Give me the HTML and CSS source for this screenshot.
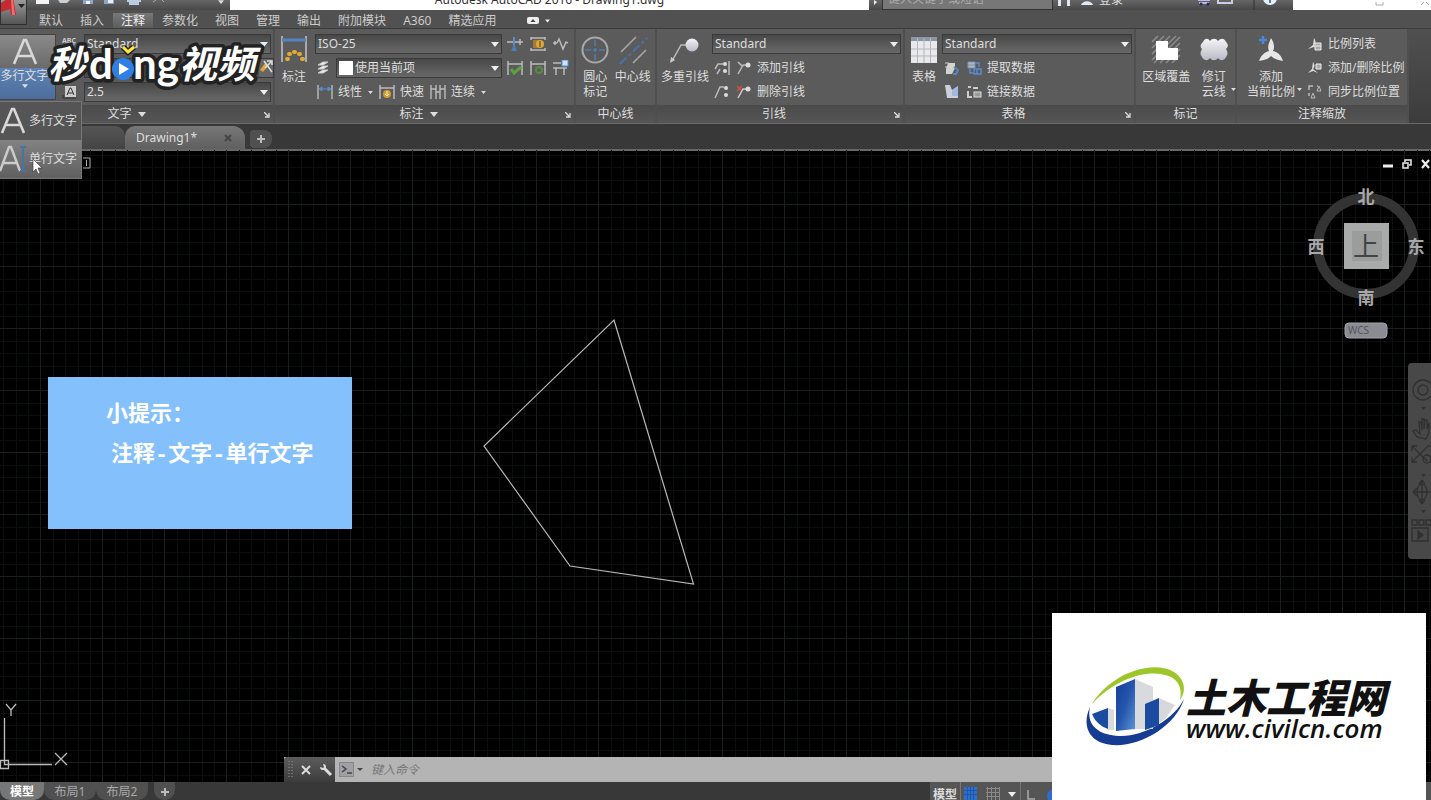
FILE: index.html
```html
<!DOCTYPE html>
<html lang="zh-CN">
<head>
    <meta charset="UTF-8">
    <meta name="viewport" content="width=device-width, initial-scale=1.0">
    <title>Autodesk AutoCAD 2016 - Drawing1.dwg</title>
    <link rel="stylesheet" href="styles.css">
</head>
<body>
    <!-- shared icons -->
    <svg class="defs" width="0" height="0" aria-hidden="true">
        <defs>
            <linearGradient id="silver" x1="0" y1="0" x2="0" y2="1">
                <stop offset="0" stop-color="#f4f4f8"/><stop offset="1" stop-color="#b9bac4"/>
            </linearGradient>
            <linearGradient id="tower" x1="0" y1="0" x2="1" y2="1">
                <stop offset="0" stop-color="#173f9a"/><stop offset="0.5" stop-color="#2456ac"/><stop offset="1" stop-color="#5f94d4"/>
            </linearGradient>
            <symbol id="down" viewBox="0 0 8 5"><path d="M0 0h8L4 5z" fill="currentColor"/></symbol>
            <symbol id="launch" viewBox="0 0 6 6"><path d="M0 0l4 4M5 1v4H1" fill="none" stroke="currentColor" stroke-width="1.3"/></symbol>
            <symbol id="letter-a" viewBox="0 0 26 28"><path d="M2 26L12 2h2l10 24M6 18h14" fill="none" stroke="#d8d8d8" stroke-width="2.6"/></symbol>
            <symbol id="dim" viewBox="0 0 16 16"><path d="M1 1v14M15 1v14" stroke="#b5b5b5" stroke-width="1.5"/><path d="M2 5h12M2 5l3-2v4zM14 5l-3-2v4z" stroke="#5b8cc8" fill="#5b8cc8"/></symbol>
            <symbol id="dim-quick" viewBox="0 0 16 16"><path d="M1 1v14M15 1v14M1 4h14" stroke="#bbb" stroke-width="1.5" fill="none"/><circle cx="8" cy="10" r="4" fill="#d79a35"/><path d="M8 7v5M6 10l2 2 2-2" stroke="#fff0a0" fill="none"/></symbol>
            <symbol id="dim-cont" viewBox="0 0 16 16"><path d="M1 1v14M6 1v14M10 1v14M15 1v14M1 5h5M10 5h5M6 8h4" stroke="#bbb" stroke-width="1.4"/></symbol>
        </defs>
    </svg>

    <header class="titlebar">
        <div class="quick">
            <svg width="150" height="10" viewBox="0 0 150 10">
                <rect x="1" y="0" width="13" height="4" fill="#f4f4f4"/>
                <path d="M23 0h12l-3 3H25z" fill="#c9ced3"/>
                <path d="M48 0h10v4H48z" fill="#8ba9c6"/><path d="M51 1h4v3h-4z" fill="#eee"/>
                <path d="M69 0h10v4H69z" fill="#8ba9c6"/><path d="M73 0h5v3h-5z" fill="#eee"/>
                <path d="M92 0h14v2h-2v3H94V2h-2z" fill="#b9cde0"/>
                <path d="M118 2l3-2M127 0l2 2" stroke="#aaa"/>
            </svg>
            <svg class="tiny" width="6" height="4"><use href="#down"/></svg>
        </div>
        <div class="doc-title">Autodesk AutoCAD 2016 - Drawing1.dwg</div>
        <div class="info">
            <svg class="info-arrow" width="13" height="10" viewBox="0 0 13 10"><path d="M5 0l3 2-3 3z" fill="#eee"/></svg>
            <input class="search" type="text" aria-label="搜索" placeholder="键入关键字或短语">
            <svg width="44" height="10" viewBox="0 0 44 10"><path d="M5 0h3v6H5zM14 0h3v6h-3z" fill="#dfe6ec"/><path d="M28 5c2-5 10-5 12 0z" fill="#dfe9f2"/></svg>
            <a class="login" href="#">登录</a>
            <svg class="info-icons" width="90" height="10" viewBox="0 0 90 10">
                <path d="M1 0h12M2 3h10" stroke="#b8bde0" stroke-width="2"/><circle cx="4" cy="4" r="1.5" fill="#252a66"/><circle cx="11" cy="4" r="1.5" fill="#252a66"/>
                <path d="M21 0v3h14V0" fill="none" stroke="#c9cdea" stroke-width="2"/>
                <path d="M57 0v10" stroke="#333"/>
                <circle cx="73" cy="-2" r="7" fill="#e8f0f7"/><path d="M73 0v3" stroke="#4b7eae" stroke-width="2"/>
            </svg>
        </div>
        <div class="window-btns">
            <svg width="60" height="10" viewBox="0 0 60 10"><path d="M5 0v3h7V0" fill="none" stroke="#aaa"/><path d="M50 3l4-4 4 4" fill="none" stroke="#aaa"/></svg>
        </div>
        <button class="app-btn" aria-label="应用程序菜单">
            <svg width="26" height="24" viewBox="0 0 26 24"><path d="M0 3L9-3h3l3 18h-5l-1-6-9 3z" fill="#c52a31"/><path d="M10 0l2 0 2 15h-3z" fill="#f06a6a"/><path d="M17 4h7l-3.500 4z" fill="#222"/></svg>
        </button>
    </header>

    <nav class="tabs">
        <a href="#">默认</a>
        <a href="#">插入</a>
        <a href="#" class="active">注释</a>
        <a href="#">参数化</a>
        <a href="#">视图</a>
        <a href="#">管理</a>
        <a href="#">输出</a>
        <a href="#">附加模块</a>
        <a href="#">A360</a>
        <a href="#">精选应用</a>
        <button class="min-btn" aria-label="最小化功能区">
            <svg width="24" height="8" viewBox="0 0 24 8"><rect width="12" height="7" rx="2" fill="#eee"/><path d="M3.500 5h5L6 2z" fill="#444"/><path d="M18 2.500h5l-2.500 3z" fill="#eee"/></svg>
        </button>
    </nav>

    <main class="ribbon">
        <section class="panel">
            <div class="panel-body text-body">
                <button class="text-btn">
                    <span class="text-btn-top"><svg width="26" height="28"><use href="#letter-a"/></svg></span>
                    <span class="text-btn-label">多行文字<svg width="6" height="4"><use href="#down"/></svg></span>
                </button>
                <div class="rows">
                    <div class="row">
                        <svg width="16" height="16" viewBox="0 0 16 16"><text x="0" y="7" class="abc">ABC</text><path d="M3 10l3 4 7-7" stroke="#6fa8dc" fill="none" stroke-width="2"/></svg>
                        <select aria-label="文字样式"><option>Standard</option></select>
                    </div>
                    <div class="row">
                        <svg width="16" height="16" viewBox="0 0 16 16"><circle cx="7" cy="7" r="4" fill="none" stroke="#ccc" stroke-width="2"/></svg>
                        <div class="find">
                            <input type="text" aria-label="查找文字">
                            <svg width="14" height="16" viewBox="0 0 14 16"><path d="M1 11l5-7 3 3-5 6z" fill="#e0a339"/><path d="M5 2l8 11M12 3L6 9M8 2h5v4" stroke="#ddd" stroke-width="1.5" fill="none"/></svg>
                        </div>
                    </div>
                    <div class="row">
                        <svg width="16" height="16" viewBox="0 0 16 16"><rect x="3" y="2" width="11" height="11" fill="#ccc"/><path d="M5 11l3-7h1l3 7M6 9h5M1 14v-3M1 14h13" stroke="#333" fill="none"/></svg>
                        <select aria-label="文字高度"><option>2.5</option></select>
                    </div>
                </div>
            </div>
            <h2>文字<svg width="8" height="5"><use href="#down"/></svg><button class="launcher" aria-label="文字设置"><svg width="6" height="6"><use href="#launch"/></svg></button></h2>
        </section>

        <section class="panel">
            <div class="panel-body dim-body">
                <button class="big">
                    <svg width="30" height="32" viewBox="0 0 30 32"><path d="M3 2v26M27 2v26" stroke="#aaa" stroke-width="2"/><path d="M3 6h24" stroke="#5584bb" stroke-width="3"/><path d="M8 25h1M10 20h1M15 18h1M20 20h1M23 25h1" stroke="#e0aa35" stroke-width="4" stroke-linecap="round"/></svg>
                    标注
                </button>
                <div class="rows">
                    <div class="row">
                        <select aria-label="标注样式"><option>ISO-25</option></select>
                        <div class="tools">
                            <svg width="16" height="16" viewBox="0 0 16 16"><path d="M0 6h16M13 3v6" stroke="#bbb" stroke-width="1.500"/><path d="M7 1v12" stroke="#5b8cc8" stroke-width="2"/><path d="M4 15l3-7 3 7z" fill="#4d7ebd"/></svg>
                            <svg width="16" height="16" viewBox="0 0 16 16"><path d="M1 1v3M15 1v3M1 2h14M1 12v3M15 12v3M1 14h14" stroke="#bbb" stroke-width="1.5"/><rect x="3" y="4" width="6" height="8" fill="#a77d2c"/><circle cx="10" cy="8" r="4" fill="#dda63a"/><path d="M10 5v6" stroke="#604010"/></svg>
                            <svg width="16" height="16" viewBox="0 0 16 16"><path d="M0 7h4M2 5v4M4 7l2-4 4 10 3-7 2 1" fill="none" stroke="#bbb" stroke-width="1.500"/></svg>
                        </div>
                    </div>
                    <div class="row">
                        <svg width="16" height="16" viewBox="0 0 16 16"><path d="M3 5l5-3h5L8 5zM3 9l5-3h5L8 9zM3 13l5-3h5l-5 3z" fill="#eee" stroke="#ccc"/></svg>
                        <div class="layer">
                            <span class="swatch"></span>
                            <select aria-label="标注图层"><option>使用当前项</option></select>
                        </div>
                        <div class="tools">
                            <svg width="16" height="16" viewBox="0 0 16 16"><path d="M1 1v14M15 1v14M1 4h14" stroke="#bbb" stroke-width="1.5"/><path d="M4 9l3 4 7-6" stroke="#5ba13c" stroke-width="3" fill="none"/></svg>
                            <svg width="16" height="16" viewBox="0 0 16 16"><path d="M1 1v14M15 1v14M1 4h14" stroke="#bbb" stroke-width="1.5"/><circle cx="9" cy="10" r="3" fill="none" stroke="#5b8b43" stroke-width="2"/></svg>
                            <svg width="16" height="16" viewBox="0 0 16 16"><path d="M0 3h8M3 8v7M11 8v7M0 8h14" stroke="#bbb" stroke-width="1.5"/><rect x="9" y="0" width="6" height="6" fill="#cfe2fa" stroke="#5b93da"/></svg>
                        </div>
                    </div>
                    <div class="row dim-row">
                        <button><svg width="16" height="16"><use href="#dim"/></svg>线性</button>
                        <button class="more" aria-label="更多标注"><svg width="5" height="3"><use href="#down"/></svg></button>
                        <button><svg width="16" height="16"><use href="#dim-quick"/></svg>快速</button>
                        <button><svg width="16" height="16"><use href="#dim-cont"/></svg>连续</button>
                        <button class="more" aria-label="更多连续"><svg width="5" height="3"><use href="#down"/></svg></button>
                    </div>
                </div>
            </div>
            <h2>标注<svg width="8" height="5"><use href="#down"/></svg><button class="launcher" aria-label="标注设置"><svg width="6" height="6"><use href="#launch"/></svg></button></h2>
        </section>

        <section class="panel">
            <div class="panel-body even">
                <button class="big">
                    <svg width="30" height="32" viewBox="0 0 30 32"><circle cx="15" cy="16" r="12.500" fill="none" stroke="#aaa" stroke-width="2"/><path d="M15 6v6M15 14v4M15 20v6M5 16h6M13 16h4M19 16h6" stroke="#4c7dbb" stroke-width="1.500"/></svg>
                    圆心<br>标记
                </button>
                <button class="big">
                    <svg width="30" height="32" viewBox="0 0 30 32"><path d="M3 18L18 3M15 29l13-13" stroke="#aaa" stroke-width="1.500"/><path d="M2 30L29 4" stroke="#4772ad" stroke-width="2" stroke-dasharray="9 3 3 3"/></svg>
                    中心线
                </button>
            </div>
            <h2>中心线</h2>
        </section>

        <section class="panel">
            <div class="panel-body">
                <button class="big">
                    <svg width="30" height="32" viewBox="0 0 30 32"><path d="M2 27l9-16h7" fill="none" stroke="#bbb" stroke-width="1.500"/><path d="M0 29l1-6 4 3z" fill="#ccc"/><circle cx="22" cy="11" r="6.500" fill="url(#silver)"/></svg>
                    多重引线
                </button>
                <div class="rows">
                    <div class="row"><select aria-label="多重引线样式"><option>Standard</option></select></div>
                    <div class="row">
                        <button class="icon-btn" aria-label="对齐"><svg width="16" height="16" viewBox="0 0 16 16"><path d="M1 9l3-5h5M3 14l3-5M15 1v14" stroke="#bbb" fill="none" stroke-width="1.500"/><circle cx="11" cy="4" r="2" fill="#ddd"/><circle cx="11" cy="11" r="2" fill="#ddd"/></svg></button>
                        <button><svg width="16" height="16" viewBox="0 0 16 16"><path d="M2 2l5 5M2 14l5-9h5" stroke="#bbb" fill="none" stroke-width="1.500"/><circle cx="12" cy="5" r="2.500" fill="#ddd"/></svg>添加引线</button>
                    </div>
                    <div class="row">
                        <button class="icon-btn" aria-label="合并"><svg width="16" height="16" viewBox="0 0 16 16"><path d="M1 14l5-11h4" stroke="#bbb" fill="none" stroke-width="1.500"/><circle cx="12" cy="4" r="2" fill="#ddd"/><circle cx="12" cy="11" r="2" fill="#ddd"/></svg></button>
                        <button><svg width="16" height="16" viewBox="0 0 16 16"><path d="M1 2l5 5M6 2L1 7" stroke="#ce5046" stroke-width="1.500"/><path d="M2 14l5-9h5" stroke="#ccc" fill="none" stroke-width="1.500"/><circle cx="12" cy="5" r="2.500" fill="#ddd"/></svg>删除引线</button>
                    </div>
                </div>
            </div>
            <h2>引线<button class="launcher" aria-label="引线设置"><svg width="6" height="6"><use href="#launch"/></svg></button></h2>
        </section>

        <section class="panel">
            <div class="panel-body">
                <button class="big">
                    <svg width="30" height="32" viewBox="0 0 30 32"><path d="M2 3h26v26H2z" fill="#e9e9ec"/><path d="M2 3h26v4H2z" fill="#8b96a6"/><path d="M8.500 4v25M15 4v25M21.500 4v25M2 15h26M2 22h26" stroke="#b5b7bc"/></svg>
                    表格
                </button>
                <div class="rows">
                    <div class="row"><select aria-label="表格样式"><option>Standard</option></select></div>
                    <div class="row">
                        <button class="icon-btn" aria-label="从源下载"><svg width="16" height="16" viewBox="0 0 16 16"><path d="M1 3h4M1 7h3" stroke="#ccc"/><path d="M4 3h7v5l-3 6H2V9z" fill="#cfd4cf"/><path d="M10 7l4 3-2 4h-3" stroke="#5484c2" stroke-width="2" fill="none"/></svg></button>
                        <button><svg width="16" height="16" viewBox="0 0 16 16"><path d="M2 2h7v6H2zM2 5h7" fill="#aeb6c0" stroke="#7f94b2"/><path d="M9 3h4v4M8 9h7v5H8zM11 9v5M4 9v4h3" fill="none" stroke="#5a8bd0" stroke-width="1.500"/></svg>提取数据</button>
                    </div>
                    <div class="row">
                        <button class="icon-btn" aria-label="上载到源"><svg width="16" height="16" viewBox="0 0 16 16"><path d="M1 1h5l2 5 6-4v12H3z" fill="#c9cfdb"/><path d="M8 7l6-5v10H8z" fill="#a1b9e2"/></svg></button>
                        <button><svg width="16" height="16" viewBox="0 0 16 16"><path d="M2 3h3M7 4h5M2 7v6h4" stroke="#ccc" fill="none" stroke-width="2"/><rect x="8" y="8" width="7" height="5" fill="#999" stroke="#ddd"/></svg>链接数据</button>
                    </div>
                </div>
            </div>
            <h2>表格<button class="launcher" aria-label="表格设置"><svg width="6" height="6"><use href="#launch"/></svg></button></h2>
        </section>

        <section class="panel">
            <div class="panel-body even">
                <button class="big">
                    <svg width="30" height="32" viewBox="0 0 30 32"><path d="M1 8l6-6M1 14L13 2M1 20L19 2M1 26L25 2M3 29L29 3M9 29l20-20M15 29l14-14M21 29l8-8" stroke="#8d8d8d" stroke-width="1.500"/><path d="M5 7h12v7h10v12H5z" fill="#fff"/></svg>
                    区域覆盖
                </button>
                <button class="big">
                    <svg width="30" height="32" viewBox="0 0 30 32"><path d="M4 8c2-4 5-4 7-1c2-3 6-3 8 0c3-3 6-3 8 1c3 3 2 5 0 7c2 3 2 6 0 8c-2 4-6 4-8 1c-2 3-6 3-8 0c-2 3-6 3-8-1c-2-2-2-5 0-8c-2-2-2-4 1-7z" fill="url(#silver)"/></svg>
                    修订<br>云线
                    <svg class="corner" width="5" height="3"><use href="#down"/></svg>
                </button>
            </div>
            <h2>标记</h2>
        </section>

        <section class="panel">
            <div class="panel-body scale-body">
                <button class="big">
                    <svg width="30" height="32" viewBox="0 0 30 32"><path d="M15 4c3 5 4 9 2 13 5 1 8 4 10 10-5-1-9-2-12-5-3 3-6 4-12 5 2-6 6-9 10-10-2-4 0-8 2-13z" fill="#e6e6e6"/><path d="M7 2v8M3 6h8" stroke="#4d87d3" stroke-width="2.500"/></svg>
                    添加<br>当前比例
                    <svg class="corner" width="5" height="3"><use href="#down"/></svg>
                </button>
                <div class="rows">
                    <div class="row"><button><svg width="16" height="16" viewBox="0 0 16 16"><path d="M7 2c2 3 2 5 0 7l5 4-5-2-6 2 5-4z" fill="#ddd"/><path d="M8 7h6v7H8zM9 10h5" fill="#aaa" stroke="#eee"/></svg>比例列表</button></div>
                    <div class="row"><button><svg width="16" height="16" viewBox="0 0 16 16"><path d="M6 2c2 3 2 5 0 7l5 4-5-2-5 2 4-4z" fill="#ddd"/><path d="M9 4h5v5H9z" fill="#aaa" stroke="#eee"/></svg>添加/删除比例</button></div>
                    <div class="row"><button><svg width="16" height="16" viewBox="0 0 16 16"><path d="M2 6V2h4M2 9v3M10 2h1" fill="none" stroke="#bbb" stroke-width="1.500"/><path d="M10 7l2-5 2 5zM4 14l2-5 2 5z" fill="none" stroke="#bbb"/></svg>同步比例位置</button></div>
                </div>
            </div>
            <h2>注释缩放</h2>
        </section>
    </main>

    <div class="files">
        <span class="file start-tab"></span>
        <span class="file current">Drawing1*<button aria-label="关闭"><svg width="8" height="8" viewBox="0 0 8 8"><path d="M1 1l6 6M7 1L1 7" stroke="#444" stroke-width="2"/></svg></button></span>
        <button class="file-add" aria-label="新图形"><svg width="8" height="8" viewBox="0 0 8 8"><path d="M4 0v8M0 4h8" stroke="#bbb" stroke-width="2"/></svg></button>
    </div>

    <div class="canvas">
        <svg class="drawing" width="100%" height="100%">
            <defs>
                <pattern id="grid" width="62" height="62" x="40" y="54" patternUnits="userSpaceOnUse">
                    <path d="M13.500 0v62M25.500 0v62M38.500 0v62M50.500 0v62M0 13.500h62M0 25.500h62M0 38.500h62M0 50.500h62" stroke="#0d0e0e"/>
                    <path d="M0.500 0v62M0 0.500h62" stroke="#1c1e1e"/>
                </pattern>
            </defs>
            <rect width="100%" height="100%" fill="url(#grid)"/>
            <path d="M614 170L693.500 434L570 416L484 296z" fill="none" stroke="#b9b9b9" stroke-width="1.200"/>
            <path d="M83 8h7v10h-7M86.500 10v6" fill="none" stroke="#aaa"/>
        </svg>

        <div class="view-btns">
            <button aria-label="最小化"><svg width="10" height="10" viewBox="0 0 10 10"><path d="M0 7h10" stroke="#eee" stroke-width="3"/></svg></button>
            <button aria-label="还原"><svg width="10" height="10" viewBox="0 0 10 10"><path d="M1 4h5v5H1zM3 3V1h6v5H7" fill="none" stroke="#eee" stroke-width="1.500"/></svg></button>
            <button aria-label="关闭"><svg width="10" height="10" viewBox="0 0 10 10"><path d="M1 1l7 8M8 1L1 9" stroke="#eee" stroke-width="2.200"/></svg></button>
        </div>

        <svg class="cube" width="120" height="156" viewBox="0 0 120 156">
            <circle cx="60" cy="60" r="48" fill="none" stroke="#333" stroke-width="10"/>
            <rect x="38" y="37" width="45" height="46" fill="#a9abab"/>
            <rect x="46" y="45" width="30" height="30" fill="#9b9d9d"/>
            <text x="60" y="70" class="cube-top">上</text>
            <text x="60" y="17" class="cube-dir">北</text>
            <text x="60" y="118" class="cube-dir">南</text>
            <text x="10" y="67" class="cube-dir">西</text>
            <text x="110" y="67" class="cube-dir">东</text>
            <rect x="39" y="137" width="42" height="15" rx="4" fill="#8b8b93" stroke="#a3a3aa"/>
            <text x="42" y="148" class="wcs">WCS</text>
        </svg>

        <div class="navbar">
            <svg width="23" height="196" viewBox="0 0 23 196" fill="none" stroke="#303030" stroke-width="1.300">
                <circle cx="15" cy="27" r="10"/><circle cx="15" cy="27" r="5"/>
                <path d="M13 44h5l-2.500 3zM13 111h5l-2.500 3zM13 147h5l-2.500 3z" fill="#303030" stroke="none"/>
                <path d="M9 74l-4-6 3-1 4 4-1-12h2l1 8V56h2v10l1-9h2v9l2-6v10l-3 6z"/>
                <path d="M5 84l14 14M19 84L5 98M4 88v-5h5M19 83h4M4 94v5h5"/><circle cx="19" cy="96" r="4"/>
                <path d="M14 117v24M5 129h18M14 117l-3 4M14 117l3 4M14 141l-3-4M14 141l3-4M5 129l4-4M5 129l4 4"/><ellipse cx="14" cy="129" rx="5" ry="8"/>
                <path d="M4 157h5v5H4zM11 157h5v5h-5zM18 157h5v5h-5zM4 165h16v13H4z"/><path d="M10 168l5 4-5 4z" fill="#303030"/>
            </svg>
        </div>

        <div class="tip">
            <p>小提示：</p>
            <p class="tip-path">注释-文字-单行文字</p>
        </div>

        <svg class="ucs" width="72" height="72" viewBox="0 0 72 72" fill="none" stroke="#bbb" stroke-width="1.300">
            <path d="M4.500 18v46.500H52M0.500 60.500h8v8h-8z"/>
            <path d="M6 4l5 6 5-6M11 10v6M55 53l12 12M67 53L55 65"/>
        </svg>

        <div class="command">
            <div class="command-grip">
                <svg width="5" height="18" viewBox="0 0 5 18"><path d="M1 0v18M4 0v18" stroke="#999" stroke-dasharray="1 2"/></svg>
                <button aria-label="关闭"><svg width="10" height="10" viewBox="0 0 10 10"><path d="M1 1l8 8M9 1L1 9" stroke="#ddd" stroke-width="2"/></svg></button>
                <button aria-label="自定义"><svg width="14" height="14" viewBox="0 0 14 14"><path d="M5 5l7 7" stroke="#ddd" stroke-width="3"/><path d="M4 1a3 3 0 1 1-3 3l3 1 1-1z" fill="#ddd"/></svg></button>
            </div>
            <svg class="prompt" width="25" height="15" viewBox="0 0 25 15"><rect x="0.500" y="0.500" width="14" height="14" fill="#a0a0a4" stroke="#888"/><path d="M3 4l4 3-4 3M8 11h5" fill="none" stroke="#444" stroke-width="1.500"/><path d="M18 6h6l-3 3z" fill="#444"/></svg>
            <input type="text" aria-label="命令" placeholder="键入命令">
        </div>
    </div>

    <footer class="bottom">
        <button class="layout active">模型</button>
        <button class="layout">布局1</button>
        <button class="layout">布局2</button>
        <button class="layout add" aria-label="新建布局"><svg width="8" height="8" viewBox="0 0 8 8"><path d="M4 0v8M0 4h8" stroke="#bbb" stroke-width="2"/></svg></button>
        <div class="status">
            <button>模型</button>
            <svg width="100" height="18" viewBox="0 0 100 18">
                <path d="M0.500 0v18M60.500 0v18" stroke="#777"/>
                <rect x="4" y="5" width="13" height="13" fill="#2f6fca"/><path d="M7.500 5v13M10.500 5v13M13.500 5v13M4 8.500h13M4 12.500h13" stroke="#1f57a8"/>
                <path d="M27.500 5v13M31.500 5v13M35.500 5v13M39.500 5v13M26 6.500h14M26 10.500h14M26 14.500h14" stroke="#8a8a8a"/>
                <path d="M48 10h8l-4 5z" fill="#eee"/>
                <path d="M68 8v9h7" fill="none" stroke="#aaa" stroke-width="1.500"/>
                <circle cx="94" cy="14" r="7" fill="#2f6fca"/>
            </svg>
        </div>
    </footer>

    <!-- open text menu -->
    <div class="menu">
        <button><svg width="26" height="28"><use href="#letter-a"/></svg>多行文字</button>
        <button class="hover"><svg width="26" height="28" viewBox="0 0 26 28"><path d="M0 26L9 2h2l9 24M3 18h14" fill="none" stroke="#ccc" stroke-width="2.400"/><path d="M23 2v24M20 2h6M20 26h6" stroke="#4772a5" stroke-width="2"/></svg>单行文字</button>
        <svg class="cursor" width="11" height="15" viewBox="0 0 11 15"><path d="M1 0l9 9H6l2 5-2 1-2-5-3 3z" fill="#fff" stroke="#333" stroke-width="0.600"/></svg>
    </div>

    <svg class="watermark" width="222" height="58" viewBox="0 0 222 58">
        <g class="mark-text">
            <text x="4" y="37" class="mark-cn">秒</text>
            <text x="45" y="38" class="mark-en">d</text>
            <text x="89" y="38" class="mark-en">ng</text>
            <text x="135" y="37" class="mark-cn">视频</text>
        </g>
        <circle cx="79" cy="28" r="11" fill="#2f80e4"/>
        <path d="M75 22l10 6-10 6z" fill="#fff"/>
        <path d="M79 6l5 5 6-5" fill="none" stroke="#222" stroke-width="6"/><path d="M79 6l5 5 6-5" fill="none" stroke="#ffe93a" stroke-width="3"/>
    </svg>

    <div class="site-logo">
        <svg width="100" height="82" viewBox="0 0 100 82">
            <path d="M6 38C24 8 66-7 88 6c12 8 12 20 6 28 2-10 0-18-9-23C66 2 32 10 6 38z" fill="#9dc62b"/>
            <path d="M4 41c-9 20 0 36 22 38 30 2 64-20 72-46-10 20-40 38-65 37C12 69 0 59 4 41z" fill="#153c92"/>
            <path d="M49 13l18 8v42H49z" fill="#d8dadd"/><path d="M30 21l19-8v50l-19 2z" fill="url(#tower)"/>
            <path d="M73 32l16 7-9 13-7 6z" fill="#d6d8db"/><path d="M59 38l14-6v27l-14 5z" fill="#1b4ba0"/>
            <path d="M22 42l6 2v20h-6z" fill="#d8dadd"/><path d="M6 48l16-6v21C16 61 9 56 6 48z" fill="#1b4ba0"/>
        </svg>
        <div class="site-name">
            <strong>土木工程网</strong>
            <span>www.civilcn.com</span>
        </div>
    </div>
</body>
</html>
```
FILE: styles.css
```css
* {
    box-sizing: border-box;
    margin: 0;
    padding: 0;
}
body {
    position: relative;
    display: flex;
    flex-direction: column;
    height: 100vh;
    overflow: hidden;
    background-color: #000;
    color: #dedede;
    font-family: "Noto Sans", "Noto Sans CJK SC", sans-serif;
    font-size: 12px;
    line-height: 16px;
}
.defs {
    position: absolute;
}
svg {
    flex-shrink: 0;
}
button {
    border: none;
    background: none;
    color: inherit;
    font: inherit;
    white-space: nowrap;
}
input, select {
    min-width: 0;
    border: none;
    color: inherit;
    font: inherit;
}
a {
    color: inherit;
    text-decoration: none;
}

/* title bar */
.titlebar {
    position: relative;
    display: flex;
    height: 10px;
    background: linear-gradient(#666, #484848);
}
.quick {
    display: flex;
    justify-content: space-between;
    width: 230px;
    padding: 0 6px 0 35px;
}
.doc-title {
    display: flex;
    flex: 1;
    align-items: flex-end;
    justify-content: center;
    padding-bottom: 2px;
    overflow: hidden;
    background-color: #fff;
    color: #333;
}
.info {
    display: flex;
    align-items: flex-end;
    width: 424px;
    overflow: hidden;
}
.search {
    width: 171px;
    height: 20px;
    padding: 0 5px 4px;
    border: 1px solid #333;
    background-color: #777;
}
.search::placeholder {
    color: #aaa;
}
.login {
    width: 60px;
    padding-left: 2px;
    padding-bottom: 2px;
}
.info-icons {
    margin-left: 40px;
}
.window-btns {
    width: 138px;
    padding-left: 78px;
    overflow: hidden;
    background-color: #fff;
}
.app-btn {
    position: absolute;
    top: 0;
    left: 0;
    z-index: 2;
    width: 27px;
    height: 25px;
    border: 1px solid #303030;
    border-top: none;
    background: linear-gradient(#999, #555);
}

/* ribbon tabs */
.tabs {
    display: flex;
    gap: 1px;
    height: 19px;
    padding: 3px 0 0 31px;
    border-bottom: 1px solid #3c3c3c;
    background-color: #515151;
    color: #ccc;
    white-space: nowrap;
}
.tabs a {
    padding: 0 8px;
}
.tabs .active {
    background: linear-gradient(#777, #5d5d5d);
    color: #f0f0f0;
}
.min-btn {
    margin-left: 22px;
}
.min-btn svg {
    display: block;
}

/* ribbon */
.ribbon {
    display: grid;
    grid-template-columns: 275fr 301fr 81fr 248fr 231fr 101fr 172fr;
    padding-right: 22px;
    border-bottom: 1px solid #6a6a6a;
    background: linear-gradient(#505050, #3c3c3c);
}
.panel {
    min-width: 0;
    border-right: 2px solid #4f4f4f;
    background-color: #5b5b5b;
}
.panel-body {
    display: flex;
    gap: 3px;
    height: 76px;
    padding: 5px 2px 0 4px;
}
.panel h2 {
    position: relative;
    display: flex;
    align-items: center;
    justify-content: center;
    gap: 6px;
    height: 18px;
    padding-right: 12px;
    background: linear-gradient(#4b4b4b, #555);
    font-size: 12px;
    font-weight: normal;
}
.panel:first-child h2 {
    padding-right: 20px;
}
.panel h2:not(:has(svg)) {
    padding-right: 0;
}
.launcher {
    position: absolute;
    right: 3px;
    line-height: 6px;
}
.rows {
    display: flex;
    flex: 1;
    flex-direction: column;
    gap: 4px;
    min-width: 0;
}
.row {
    display: flex;
    align-items: center;
    gap: 6px;
    height: 20px;
}
.row button {
    display: flex;
    align-items: center;
    gap: 5px;
}
.row .icon-btn {
    margin-left: 2px;
}
select {
    flex: 1;
    height: 20px;
    padding: 0 2px;
    border: 1px solid #3a3a3a;
    appearance: none;
    background-image: url("data:image/svg+xml,%3Csvg xmlns='http://www.w3.org/2000/svg' width='8' height='5'%3E%3Cpath d='M0 0h8L4 5z' fill='%23eee'/%3E%3C/svg%3E"), linear-gradient(#484848, #686868);
    background-position: right 2px center, 0 0;
    background-repeat: no-repeat;
    background-size: 8px 5px, 100% 100%;
}
.big {
    position: relative;
    display: flex;
    flex-direction: column;
    align-items: center;
    line-height: 15px;
    text-align: center;
}
.big svg {
    margin-bottom: 3px;
}
.big .corner {
    position: absolute;
    right: -7px;
    bottom: 14px;
    margin: 0;
}
.even {
    justify-content: space-around;
    gap: 2px;
    padding: 5px 3px 0;
}
.dim-body {
    gap: 6px;
    padding-right: 0;
}
.scale-body {
    gap: 12px;
    padding-left: 10px;
}
.text-body {
    gap: 6px;
    padding-left: 0;
}
.text-btn {
    display: flex;
    flex-direction: column;
    width: 56px;
    height: 66px;
    border: 1px solid #444;
    border-left: none;
}
.text-btn-top {
    display: flex;
    flex: 1;
    align-items: center;
    justify-content: center;
    width: 100%;
    padding-right: 6px;
    background: linear-gradient(#8a8a8a, #6a6a6a);
}
.text-btn-label {
    display: flex;
    flex-direction: column;
    align-items: center;
    width: 100%;
    height: 31px;
    padding-right: 6px;
    background: linear-gradient(#5f83b5, #4c6d9d);
}
.abc {
    fill: #ccc;
    font-size: 7px;
    font-weight: bold;
}
.find {
    display: flex;
    flex: 1;
    height: 20px;
    border: 1px solid #3a3a3a;
    background-color: #666;
}
.find input {
    flex: 1;
    background-color: #4c4c4c;
}
.tools {
    display: flex;
    gap: 7px;
    width: 67px;
}
.row:has(.tools) {
    gap: 5px;
}
.layer {
    display: flex;
    flex: 1;
    align-items: center;
    min-width: 0;
    border: 1px solid #3a3a3a;
    background: linear-gradient(#484848, #686868);
}
.layer select {
    height: 18px;
    border: none;
    background-color: transparent;
    background-image: url("data:image/svg+xml,%3Csvg xmlns='http://www.w3.org/2000/svg' width='8' height='5'%3E%3Cpath d='M0 0h8L4 5z' fill='%23eee'/%3E%3C/svg%3E");
    background-size: 8px 5px;
}
.swatch {
    width: 14px;
    height: 14px;
    margin-left: 2px;
    background-color: #fff;
}
.dim-row {
    padding-left: 2px;
}

/* file tabs */
.files {
    display: flex;
    align-items: flex-end;
    height: 27px;
    border-bottom: 2px solid #686868;
    background-color: #383838;
}
.file {
    display: flex;
    align-items: center;
    justify-content: space-between;
    height: 23px;
    background: linear-gradient(#777, #606060);
}
.start-tab {
    width: 125px;
    border-radius: 0 10px 0 0;
    background: linear-gradient(#555, #444);
}
.current {
    width: 120px;
    padding: 0 13px 0 11px;
    border-radius: 10px 12px 0 0;
}
.file-add {
    width: 22px;
    height: 18px;
    margin: 0 0 1px 5px;
    border-radius: 4px 8px 8px 4px;
    background-color: #505050;
}

/* drawing area */
.canvas {
    position: relative;
    flex: 1;
    min-height: 0;
    margin-top: -1px;
}
.drawing {
    display: block;
}
.view-btns {
    position: absolute;
    top: 9px;
    right: 0;
    display: flex;
    gap: 9px;
    line-height: 10px;
}
.cube {
    position: absolute;
    top: 36px;
    right: 5px;
    overflow: visible;
}
.cube-dir, .cube-top {
    font-family: "Noto Sans CJK SC", sans-serif;
    text-anchor: middle;
}
.cube-dir {
    fill: #a8a8a8;
    font-size: 17px;
    font-weight: bold;
}
.cube-top {
    fill: #444;
    font-size: 26px;
}
.wcs {
    fill: #55555c;
    font-size: 10px;
}
.navbar {
    position: absolute;
    top: 213px;
    right: 0;
    border-radius: 4px 0 0 4px;
    background-color: #484848;
    line-height: 0;
}
.tip {
    position: absolute;
    top: 227px;
    left: 48px;
    width: 304px;
    height: 152px;
    padding: 19px 0 0 58px;
    background-color: #84c0fc;
    color: #fff;
    font-family: "Liberation Mono", "Noto Sans CJK SC", monospace;
    font-size: 22px;
    font-weight: bold;
    line-height: 40px;
    white-space: nowrap;
}
.tip-path {
    padding-left: 5px;
}
.ucs {
    position: absolute;
    bottom: 10px;
    left: 0;
}
.command {
    position: absolute;
    right: 5px;
    bottom: 0;
    left: 284px;
    display: flex;
    align-items: center;
    height: 25px;
    background-color: #b4b4b4;
}
.command-grip {
    display: flex;
    align-items: center;
    gap: 8px;
    width: 51px;
    height: 25px;
    padding-left: 4px;
    border-radius: 3px 0 0 0;
    background: linear-gradient(#5c5c5c, #3c3c3c);
    line-height: 0;
}
.prompt {
    margin: 0 7px 0 4px;
}
.command input {
    flex: 1;
    background: none;
    font-style: italic;
}
.command input::placeholder {
    color: #777;
}

/* bottom bar */
.bottom {
    display: flex;
    height: 18px;
    overflow: hidden;
    background-color: #383838;
}
.layout {
    width: 52px;
    padding-top: 2px;
    border-radius: 0 0 10px 10px;
    background-color: #505050;
    color: #aaa;
}
.layout.active {
    width: 44px;
    background-color: #777;
    color: #fff;
    font-weight: bold;
}
.layout.add {
    width: 21px;
    margin-left: 6px;
}
.status {
    display: flex;
    width: 501px;
    margin-left: auto;
    background-color: #555;
}
.status button {
    height: 26px;
    padding: 0 3px;
    font-weight: bold;
}

/* text drop-down */
.menu {
    position: absolute;
    top: 101px;
    left: 0;
    z-index: 3;
    width: 82px;
    border: 1px solid #777;
    border-left: none;
    background-color: #555;
}
.menu button {
    display: flex;
    align-items: center;
    gap: 3px;
    width: 100%;
    height: 38px;
}
.menu .hover {
    background: linear-gradient(#828282, #606060);
}
.cursor {
    position: absolute;
    top: 57px;
    left: 32px;
}

/* overlays */
.watermark {
    position: absolute;
    top: 41px;
    left: 44px;
    z-index: 4;
    overflow: visible;
}
.mark-text {
    fill: #fff;
    stroke: #222;
    stroke-width: 7px;
    stroke-linejoin: round;
    paint-order: stroke;
    font-weight: bold;
}
.mark-cn {
    font-family: "Noto Sans CJK SC", sans-serif;
    font-size: 38px;
    font-style: italic;
}
.mark-en {
    font-family: Lato, sans-serif;
    font-size: 42px;
}
.site-logo {
    position: absolute;
    right: 5px;
    bottom: 0;
    display: flex;
    align-items: center;
    width: 374px;
    height: 187px;
    padding-left: 34px;
    background-color: #fff;
    color: #111;
}
.site-name {
    display: flex;
    flex-direction: column;
    margin-top: 4px;
    font-style: italic;
    white-space: nowrap;
}
.site-name strong {
    font-family: "Noto Sans CJK SC", sans-serif;
    font-size: 40px;
    font-weight: 900;
    line-height: 38px;
}
.site-name span {
    font-family: "Open Sans", sans-serif;
    font-size: 26px;
    font-weight: 600;
    line-height: 26px;
}
```
